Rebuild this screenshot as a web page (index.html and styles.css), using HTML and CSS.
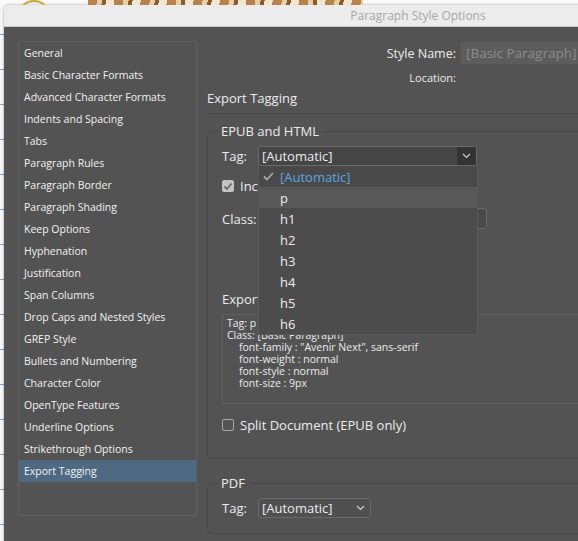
FILE: index.html
```html
<!DOCTYPE html>
<html lang="en">
<head>
    <meta charset="UTF-8">
    <title>Paragraph Style Options</title>
    <link rel="stylesheet" href="styles.css">
</head>
<body>
    <div class="backdrop"><span class="ring"></span><span class="art"></span></div>
    <div class="dialog">
        <div class="titlebar">Paragraph Style Options</div>
        <div class="content">
            <!-- Category list -->
            <ul class="sidebar">
                <li>General</li>
                <li>Basic Character Formats</li>
                <li>Advanced Character Formats</li>
                <li>Indents and Spacing</li>
                <li>Tabs</li>
                <li>Paragraph Rules</li>
                <li>Paragraph Border</li>
                <li>Paragraph Shading</li>
                <li>Keep Options</li>
                <li>Hyphenation</li>
                <li>Justification</li>
                <li>Span Columns</li>
                <li>Drop Caps and Nested Styles</li>
                <li>GREP Style</li>
                <li>Bullets and Numbering</li>
                <li>Character Color</li>
                <li>OpenType Features</li>
                <li>Underline Options</li>
                <li>Strikethrough Options</li>
                <li class="active">Export Tagging</li>
            </ul>

            <div class="main">
                <div class="name-row">
                    <label>Style Name:</label>
                    <div class="name-input">[Basic Paragraph]</div>
                </div>
                <div class="location-row">
                    <label>Location:</label>
                    <span></span>
                </div>
                <h2 class="section-title">Export Tagging</h2>

                <!-- EPUB and HTML -->
                <fieldset class="group epub">
                    <legend>EPUB and HTML</legend>
                    <div class="row tag-row">
                        <span class="lbl">Tag:</span>
                        <div class="select wide">
                            <span class="value">[Automatic]</span>
                            <span class="arrow">
                                <svg width="9" height="6" viewBox="0 0 9 6"><path d="M1 1 L4.5 4.5 L8 1" fill="none" stroke="#d0d0d0" stroke-width="1.2"/></svg>
                            </span>
                            <ul class="menu">
                                <li class="current">
                                    <span class="tick"><svg width="11" height="9" viewBox="0 0 11 9"><path d="M1 4.5 L4 7.5 L10 1" fill="none" stroke="#a8a8a8" stroke-width="1.8"/></svg></span>
                                    <span>[Automatic]</span>
                                </li>
                                <li class="hover"><span class="tick"></span><span>p</span></li>
                                <li><span class="tick"></span><span>h1</span></li>
                                <li><span class="tick"></span><span>h2</span></li>
                                <li><span class="tick"></span><span>h3</span></li>
                                <li><span class="tick"></span><span>h4</span></li>
                                <li><span class="tick"></span><span>h5</span></li>
                                <li><span class="tick"></span><span>h6</span></li>
                            </ul>
                        </div>
                    </div>
                    <div class="row check-row">
                        <span class="checkbox checked">
                            <svg width="10" height="9" viewBox="0 0 10 9"><path d="M1.5 4.5 L4 7 L8.5 1.5" fill="none" stroke="#6a6a6a" stroke-width="1.8"/></svg>
                        </span>
                        <span>Include Classes in HTML</span>
                    </div>
                    <div class="row class-row">
                        <span class="lbl">Class:</span>
                        <div class="text-input"></div>
                    </div>
                    <div class="details-label">Export Details:</div>
                    <div class="details">
                        <div>Tag: p</div>
                        <div>Class: [Basic Paragraph]</div>
                        <div class="indent">font-family : "Avenir Next", sans-serif</div>
                        <div class="indent">font-weight : normal</div>
                        <div class="indent">font-style : normal</div>
                        <div class="indent">font-size : 9px</div>
                    </div>
                    <div class="row split-row">
                        <span class="checkbox"></span>
                        <span>Split Document (EPUB only)</span>
                    </div>
                </fieldset>

                <!-- PDF -->
                <fieldset class="group pdf">
                    <legend>PDF</legend>
                    <div class="row tag-row">
                        <span class="lbl">Tag:</span>
                        <div class="select short">
                            <span class="value">[Automatic]</span>
                            <span class="arrow plain">
                                <svg width="9" height="6" viewBox="0 0 9 6"><path d="M1 1 L4.5 4.5 L8 1" fill="none" stroke="#d0d0d0" stroke-width="1.2"/></svg>
                            </span>
                        </div>
                    </div>
                </fieldset>
            </div>
        </div>
    </div>
</body>
</html>
```

FILE: styles.css
```css
body {
    margin: 0;
    width: 578px;
    height: 541px;
    overflow: hidden;
    background-color: #f7f7f7;
    background-image: repeating-linear-gradient(to bottom, transparent 0 34px, #7ea3dc 34px 35px);
    font-family: "Open Sans", "DejaVu Sans", sans-serif;
    color: #ececec;
}

/* page behind the dialog */
.backdrop {
    height: 5px;
    display: flex;
    overflow: hidden;
    background: #fafafa;
}
.ring {
    flex: none;
    width: 30px;
    height: 30px;
    margin: 0 0 0 17px;
    border: 2px solid #c9a93a;
    border-radius: 50%;
}
.art {
    width: 275px;
    margin-left: 37px;
    background: repeating-linear-gradient(100deg, #b8834a 0 9px, #e6cfa6 9px 14px, #8c5a2c 14px 18px, #f2e6d0 18px 26px);
}

.dialog {
    width: 828px;
    margin-left: 4px;
    border-radius: 5px 5px 0 0;
    overflow: hidden;
    box-shadow: 0 0 3px rgba(0, 0, 0, 0.35);
}
.titlebar {
    height: 21px;
    line-height: 21px;
    text-align: center;
    background: #ececec;
    border-bottom: 1px solid #c8c8c8;
    color: #a6a6a6;
    font-size: 12px;
}
.content {
    display: flex;
    align-items: flex-start;
    height: 520px;
    padding: 14px 0 0 14px;
    background: #535353;
}

/* category list */
.sidebar {
    list-style: none;
    margin: 0;
    padding: 0;
    width: 177px;
    height: 473px;
    border: 1px solid #606060;
    font-size: 10.5px;
}
.sidebar li {
    height: 22px;
    line-height: 22px;
    padding-left: 5px;
    color: #f2f2f2;
    white-space: nowrap;
}
.sidebar li.active {
    background: #4e6981;
}

.main {
    margin-left: 10px;
    padding-top: 1px;
    width: 600px;
}
.name-row, .location-row {
    display: grid;
    grid-template-columns: 249px 300px;
    column-gap: 5px;
    align-items: center;
}
.name-row label, .location-row label {
    text-align: right;
}
.name-row {
    height: 22px;
    font-size: 12.5px;
}
.name-input {
    height: 22px;
    line-height: 22px;
    padding-left: 5px;
    background: #5c5c5c;
    color: #8d8d8d;
    font-size: 13.5px;
}
.location-row {
    height: 20px;
    margin-top: 3px;
    font-size: 11px;
}
.section-title {
    margin: 0;
    height: 22px;
    line-height: 22px;
    padding-bottom: 4px;
    border-bottom: 1px solid #474747;
    font-size: 13px;
    font-weight: normal;
}

/* grouped boxes */
.group {
    margin: 9px 0 0;
    padding: 7px 14px 25px;
    border: 1px solid #484848;
    border-radius: 4px;
    font-size: 13px;
}
.group legend {
    height: 16px;
    line-height: 16px;
    margin-left: -5px;
    padding: 0 4px;
    font-size: 13px;
}
.group.pdf {
    margin-top: 16px;
    padding-bottom: 15px;
}
.row {
    display: flex;
    align-items: center;
    height: 20px;
}
.lbl {
    width: 36px;
}
.check-row {
    margin-top: 10px;
}
.class-row {
    margin-top: 12px;
    height: 21px;
}
.split-row {
    margin-top: 13px;
    height: 16px;
}

.select {
    position: relative;
    display: flex;
    height: 18px;
    border: 1px solid #6a6a6a;
    border-radius: 3px;
    background: #454545;
}
.select.wide {
    width: 217px;
}
.select.short {
    width: 111px;
    background: #505050;
}
.select .value {
    flex: 1;
    padding-left: 3px;
    line-height: 18px;
    color: #ececec;
}
.select .arrow {
    width: 19px;
    display: flex;
    align-items: center;
    justify-content: center;
    background: #333333;
    border-radius: 0 2px 2px 0;
}
.select .arrow.plain {
    background: none;
}

/* open dropdown list */
.menu {
    position: absolute;
    top: 19px;
    left: -1px;
    z-index: 5;
    list-style: none;
    margin: 0;
    padding: 0;
    width: 218px;
    background: #4c4c4c;
    border: 1px solid #5a5a5a;
    border-top: none;
}
.menu li {
    display: flex;
    align-items: center;
    height: 21px;
    color: #ececec;
}
.menu li.current {
    background: #494949;
    color: #5ba6e6;
}
.menu li.hover {
    background: #585858;
}
.menu .tick {
    width: 21px;
    padding-left: 4px;
    box-sizing: border-box;
    display: flex;
    align-items: center;
}

.checkbox {
    width: 12px;
    height: 12px;
    margin-right: 6px;
    border: 1px solid #a9a9a9;
    border-radius: 2px;
    box-sizing: border-box;
    display: flex;
    align-items: center;
    justify-content: center;
}
.checkbox.checked {
    background: #c3c3c3;
    border-color: #c3c3c3;
}

.text-input {
    width: 227px;
    height: 19px;
    border: 1px solid #6a6a6a;
    border-radius: 3px;
    background: #4a4a4a;
}

.details-label {
    margin-top: 63px;
    height: 14px;
    line-height: 14px;
}
.details {
    margin-top: 8px;
    height: 83px;
    padding: 2px 4px 3px;
    border: 1px solid #616161;
    font-size: 10.5px;
    line-height: 12px;
}
.details .indent {
    padding-left: 12px;
}
```
